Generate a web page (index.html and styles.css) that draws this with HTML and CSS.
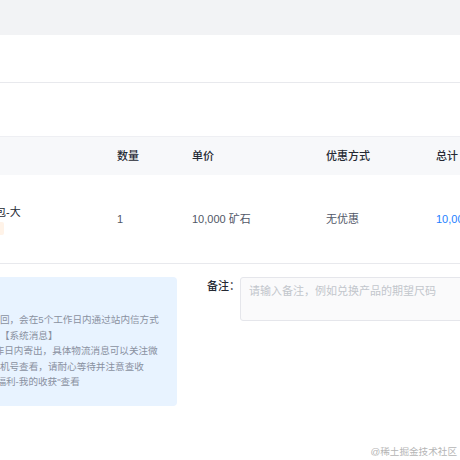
FILE: index.html
```html
<!DOCTYPE html>
<html lang="zh-CN">
<head>
<meta charset="utf-8">
<title>确认订单</title>
<link rel="stylesheet" href="styles.css">
</head>
<body>
<div class="page">
  <div class="topband"></div>
  <div class="card">
    <div class="sec1"></div>
    <div class="sec2"></div>
    <div class="table">
      <div class="thead">
        <div class="c c-prod">商品信息</div>
        <div class="c">数量</div>
        <div class="c">单价</div>
        <div class="c">优惠方式</div>
        <div class="c">总计</div>
      </div>
      <div class="trow">
        <div class="c c-prod">
          <div class="prod">
            <div class="name">掘金纪念礼包-大</div>
            <div class="tag">限时兑换中</div>
          </div>
        </div>
        <div class="c">1</div>
        <div class="c">10,000 矿石</div>
        <div class="c">无优惠</div>
        <div class="c total">10,000 矿石</div>
      </div>
    </div>
    <div class="bottom">
      <div class="notice">
        <div class="notice-title">兑换须知</div>
        <p>若兑换失败，奖品将退回，会在5个工作日内通过站内信方式</p>
        <p>通知，请留意消息中心【系统消息】</p>
        <p>实物奖品将在3-5个工作日内寄出，具体物流消息可以关注微</p>
        <p>信公众号，或凭下单手机号查看，请耐心等待并注意查收</p>
        <p>兑换记录可前往 "掘金福利-我的收获"查看</p>
      </div>
      <div class="remark">
        <label class="remark-label" for="remark">备注：</label>
        <textarea id="remark" class="remark-input" placeholder="请输入备注，例如兑换产品的期望尺码"></textarea>
      </div>
    </div>
  </div>
  <div class="watermark">@稀土掘金技术社区</div>
</div>
</body>
</html>
```

FILE: styles.css
```css
html, body {
  margin: 0;
  padding: 0;
  background: #ffffff;
  overflow: hidden;
}
body {
  font-family: "Liberation Sans", "Noto Sans CJK SC", sans-serif;
}
.page {
  position: relative;
  width: 460px;
  height: 460px;
  overflow: hidden;
}
.topband {
  height: 35px;
  background: #f2f3f5;
}
.card {
  margin-left: -112px;
  width: 720px;
}
.sec1 {
  height: 47px;
  border-bottom: 1px solid #e8e9ed;
}
.sec2 {
  height: 53px;
}
.thead, .trow {
  display: grid;
  grid-template-columns: 229px 75px 134px 110px 1fr;
  align-items: center;
}
.thead {
  height: 38px;
  background: #f7f8fa;
  border-top: 1px solid #eeeff3;
  font-size: 11px;
  line-height: 16px;
  font-weight: 500;
  color: #252933;
}
.trow {
  height: 88px;
  border-bottom: 1px solid #e8e9ed;
  font-size: 11px;
  line-height: 16px;
  color: #515767;
}
.c {
  white-space: nowrap;
}
.c-prod {
  padding-left: 52px;
}
.prod {
  display: flex;
  flex-direction: column;
  align-items: flex-start;
  gap: 2px;
}
.name {
  color: #252933;
  line-height: 16px;
}
.tag {
  font-size: 9.6px;
  line-height: 13px;
  padding: 0 8px;
  background: #fff3e8;
  color: #ff7d00;
  border-radius: 2px;
}
.total {
  color: #1e80ff;
}
.bottom {
  display: flex;
  align-items: flex-start;
  gap: 30px;
  margin-top: 13px;
}
.notice {
  width: 289px;
  box-sizing: border-box;
  padding: 12px 16px 16px 16px;
  background: #e8f3ff;
  border-radius: 4px;
}
.notice-title {
  font-size: 11px;
  line-height: 16px;
  font-weight: 500;
  color: #252933;
  margin-bottom: 7px;
}
.notice p {
  margin: 0;
  font-size: 9.6px;
  line-height: 15.6px;
  color: #8a919f;
  white-space: nowrap;
}
.remark {
  flex: 1;
  display: flex;
  align-items: flex-start;
}
.remark-label {
  width: 33px;
  flex: none;
  font-size: 11px;
  line-height: 18px;
  font-weight: 500;
  color: #252933;
  white-space: nowrap;
}
.remark-input {
  flex: 1;
  height: 44px;
  box-sizing: border-box;
  margin: 0;
  padding: 5px 8px;
  border: 1px solid #e5e6eb;
  border-radius: 3px;
  background: #fafafb;
  font-family: "Liberation Sans", "Noto Sans CJK SC", sans-serif;
  font-size: 11px;
  line-height: 16px;
  color: #252933;
  resize: none;
  outline: none;
}
.remark-input::placeholder {
  color: #c2c6cc;
}
.watermark {
  position: absolute;
  right: 3px;
  bottom: 1px;
  font-size: 9.6px;
  line-height: 14px;
  color: #b5b5b5;
  white-space: nowrap;
}
```
